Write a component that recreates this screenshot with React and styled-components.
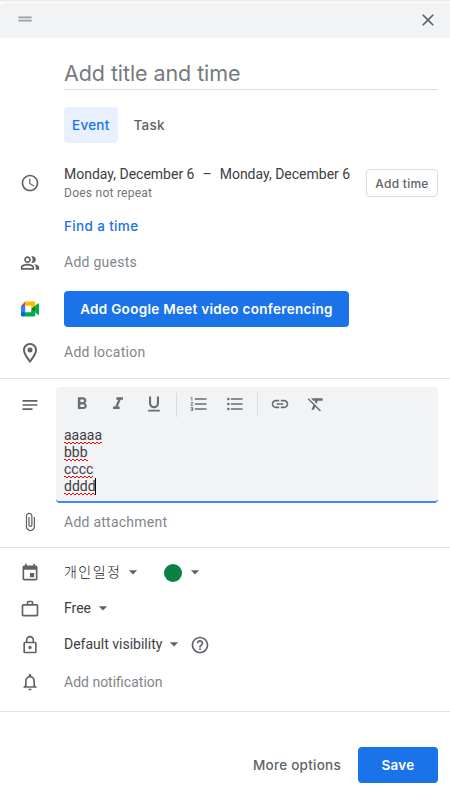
import {
  MdArrowDropDown,
  MdAttachFile,
  MdClose,
  MdDragHandle,
  MdEvent,
  MdFormatBold,
  MdFormatClear,
  MdFormatItalic,
  MdFormatListBulleted,
  MdFormatListNumbered,
  MdFormatUnderlined,
  MdHelpOutline,
  MdLink,
  MdNotes,
  MdNotificationsNone,
  MdOutlineLocationOn,
  MdOutlineLock,
  MdOutlinePeopleAlt,
  MdSchedule,
  MdWorkOutline,
} from 'react-icons/md';
import styled, { createGlobalStyle } from 'styled-components';

// Theme colors
const colors = {
  primary: '#1a73e8',
  primaryLight: '#e8f0fe',
  focus: '#4285f4',
  surface: '#f1f3f4',
  border: '#dadce0',
  divider: '#e3e4e5',
  text: '#3c4043',
  textSecondary: '#5f6368',
  placeholder: '#80868b',
  calendar: '#0b8043',
};

const fonts = {
  body: `Roboto, 'Noto Sans CJK KR', sans-serif`,
  display: `Inter, 'Liberation Sans', sans-serif`,
};

const GlobalStyle = createGlobalStyle`
  * {
    box-sizing: border-box;
  }

  body {
    margin: 0;
    background: #fff;
    color: ${colors.text};
    font-family: ${fonts.body};
    font-size: 14px;
  }

  button {
    font: inherit;
    color: inherit;
    background: none;
    border: 0;
    padding: 0;
    cursor: pointer;
  }
`;

const Dialog = styled.div`
  width: 450px;
  height: 786px;
  overflow: hidden;
  border-top: 2px solid #eeeeee;
  background: #fff;
`;

const Header = styled.header`
  display: flex;
  align-items: center;
  justify-content: space-between;
  height: 35px;
  margin-top: 1px;
  padding: 0 12px 2px 15px;
  border-radius: 4px 0 0 0;
  background: ${colors.surface};
  color: ${colors.textSecondary};

  .handle {
    color: #9aa0a6;
    margin-top: -1px;
  }
`;

const TitleInput = styled.div`
  height: 52px;
  margin: 0 12px 0 64px;
  border-bottom: 1px solid ${colors.border};
  color: #757a7f;
  font-family: ${fonts.display};
  font-size: 21.5px;
  line-height: 71px;
  letter-spacing: -0.08px;
  white-space: nowrap;
`;

const Tabs = styled.div`
  display: flex;
  gap: 8px;
  margin: 17px 0 0 64px;
`;

const Tab = styled.button`
  height: 36px;
  padding: 0 8px;
  border-radius: 4px;
  background: ${({ $active }) => ($active ? colors.primaryLight : 'transparent')};
  color: ${({ $active }) => ($active ? colors.primary : colors.textSecondary)};
  font-family: ${fonts.display};
  font-size: 13.5px;
  font-weight: 500;
  letter-spacing: 0.25px;
`;

const Row = styled.div`
  display: flex;
  align-items: center;
  height: ${({ $height }) => $height || 36}px;
  margin-top: ${({ $top }) => $top || 0}px;
  padding: 0 12px 0 20px;
`;

const RowIcon = styled.span`
  display: flex;
  flex: 0 0 20px;
  justify-content: center;
  min-width: 0;
  margin-right: 24px;
  padding-top: ${({ $drop }) => $drop || 0}px;
  color: ${colors.textSecondary};

  svg {
    flex-shrink: 0;
  }
`;

const Placeholder = styled.span`
  color: ${colors.placeholder};
  letter-spacing: ${({ $spacing = 0.25 }) => $spacing}px;
`;

const DateInfo = styled.div`
  flex: 1;
  white-space: nowrap;

  .range {
    display: flex;
    line-height: 20px;
  }

  .dash {
    margin: 0 8px;
  }

  .repeat {
    color: #70757a;
    font-size: 12px;
    line-height: 18px;
    letter-spacing: 0.25px;
  }
`;

const OutlinedButton = styled.button`
  width: 72px;
  height: 28px;
  border: 1px solid ${colors.border};
  border-radius: 4px;
  color: ${colors.textSecondary};
  font-family: ${fonts.display};
  font-size: 12px;
  font-weight: 500;
  letter-spacing: 0.25px;
  white-space: nowrap;
`;

const LinkButton = styled.button`
  display: block;
  height: 36px;
  margin-left: 64px;
  color: ${colors.primary};
  font-family: ${fonts.display};
  font-size: 13.5px;
  font-weight: 500;
  letter-spacing: 0.35px;
`;

const PrimaryButton = styled.button`
  width: ${({ $width }) => $width}px;
  height: 36px;
  border-radius: 4px;
  background: ${colors.primary};
  color: #fff;
  font-family: ${fonts.display};
  font-size: 13.5px;
  font-weight: 600;
  letter-spacing: 0.3px;
  white-space: nowrap;
`;

const Divider = styled.hr`
  height: 1px;
  margin: ${({ $top }) => $top}px 0 0;
  border: 0;
  background: ${colors.divider};
`;

const DescriptionRow = styled.div`
  display: flex;
  align-items: flex-start;
  padding: 8px 12px 0 20px;

  ${RowIcon} {
    margin: 8px 16px 0 0;
  }
`;

const Editor = styled.div`
  flex: 1;
  height: 116px;
  border-bottom: 2px solid ${colors.focus};
  border-radius: 4px;
  background: ${colors.surface};
`;

const Toolbar = styled.div`
  display: flex;
  align-items: center;
  height: 36px;
  padding-left: 8px;
  color: #6b6e71;
`;

const ToolButton = styled.button`
  display: flex;
  align-items: center;
  justify-content: center;
  width: 36px;
  height: 34px;
  padding-bottom: 2px;
`;

const ToolSeparator = styled.span`
  width: 1px;
  height: 24px;
  margin: 0 4px;
  background: ${colors.border};
`;

const Lines = styled.div`
  padding: 4px 8px;
  line-height: 17px;
`;

const Line = styled.div`
  display: flex;
  height: 17px;
`;

// Spell-check squiggle under the word
const Misspelled = styled.span`
  height: 17px;
  background:
    linear-gradient(45deg, transparent 40%, #f00 40% 60%, transparent 60%) 0 100% / 4px 2px repeat-x,
    linear-gradient(-45deg, transparent 40%, #f00 40% 60%, transparent 60%) 2px 100% / 4px 2px repeat-x;
`;

const Caret = styled.span`
  width: 1px;
  height: 17px;
  margin-left: -1px;
  background: #000;
`;

const Select = styled.button`
  display: flex;
  align-items: center;

  svg {
    margin-left: 2px;
    color: ${colors.textSecondary};
  }
`;

const CalendarName = styled.span`
  margin-bottom: 2px;
  color: #202124;
  font-weight: 300;
  letter-spacing: 1.45px;
`;

const ColorDot = styled.span`
  width: 18px;
  height: 18px;
  margin: 2px 1px 0 21px;
  border-radius: 50%;
  background: ${colors.calendar};
`;

const HelpIcon = styled(MdHelpOutline)`
  margin: 2px 0 0 6px;
  color: ${colors.textSecondary};
`;

const PinIcon = styled(MdOutlineLocationOn)`
  margin: 0 -2px;
`;

const Footer = styled.footer`
  display: flex;
  align-items: center;
  justify-content: flex-end;
  gap: 17px;
  padding: 35px 12px 0 0;
`;

const TextButton = styled.button`
  height: 36px;
  color: ${colors.textSecondary};
  font-family: ${fonts.display};
  font-size: 13.5px;
  font-weight: 500;
  letter-spacing: 0.25px;
`;

function MeetLogo() {
  return (
    <svg width="20" height="20" viewBox="-4.9 -12.6 97.2 97.2">
      <path fill="#00832d" d="M49.5 36l8.53 9.75 11.47 7.33 2-17.02-2-16.64-11.69 6.44z" />
      <path fill="#0066da" d="M0 51.5V66c0 3.315 2.685 6 6 6h14.5l3-10.96-3-9.54-9.95-3z" />
      <path fill="#e94235" d="M20.5 0L0 20.5l10.55 3 9.95-3 2.95-9.41z" />
      <path fill="#2684fc" d="M20.5 20.5H0v31h20.5z" />
      <path
        fill="#00ac47"
        d="M82.6 8.68L69.5 19.42v33.66l13.16 10.79c1.97 1.54 4.85.135 4.85-2.37V11c0-2.535-2.945-3.925-4.91-2.32zM49.5 36v15.5h-29V72h43c3.315 0 6-2.685 6-6V53.08z"
      />
      <path fill="#ffba00" d="M63.5 0h-43v20.5h29V36l20-16.57V6c0-3.315-2.685-6-6-6z" />
    </svg>
  );
}

const toolGroups = [
  [MdFormatBold, MdFormatItalic, MdFormatUnderlined],
  [MdFormatListNumbered, MdFormatListBulleted],
  [MdLink, MdFormatClear],
];

const description = ['aaaaa', 'bbb', 'cccc', 'dddd'];

function DescriptionEditor() {
  return (
    <Editor>
      <Toolbar>
        {toolGroups.map((group, index) => [
          index > 0 && <ToolSeparator key={`separator-${index}`} />,
          ...group.map((Icon) => (
            <ToolButton key={Icon.name}>
              <Icon size={20} />
            </ToolButton>
          )),
        ])}
      </Toolbar>
      <Lines>
        {description.map((line, index) => (
          <Line key={line}>
            <Misspelled>{line}</Misspelled>
            {index === description.length - 1 && <Caret />}
          </Line>
        ))}
      </Lines>
    </Editor>
  );
}

export default function App() {
  return (
    <>
      <GlobalStyle />
      <Dialog>
        <Header>
          <MdDragHandle className="handle" size={20} />
          <MdClose size={20} />
        </Header>
        <TitleInput>Add title and time</TitleInput>
        <Tabs>
          <Tab $active>Event</Tab>
          <Tab>Task</Tab>
        </Tabs>
        <Row $height={50} $top={15}>
          <RowIcon>
            <MdSchedule size={20} />
          </RowIcon>
          <DateInfo>
            <div className="range">
              <span>Monday, December 6</span>
              <span className="dash">–</span>
              <span>Monday, December 6</span>
            </div>
            <div className="repeat">Does not repeat</div>
          </DateInfo>
          <OutlinedButton>Add time</OutlinedButton>
        </Row>
        <LinkButton>Find a time</LinkButton>
        <Row>
          <RowIcon $drop={2}>
            <MdOutlinePeopleAlt size={20} />
          </RowIcon>
          <Placeholder>Add guests</Placeholder>
        </Row>
        <Row $top={11}>
          <RowIcon>
            <MeetLogo />
          </RowIcon>
          <PrimaryButton $width={285}>Add Google Meet video conferencing</PrimaryButton>
        </Row>
        <Row $top={7}>
          <RowIcon $drop={2}>
            <PinIcon size={24} />
          </RowIcon>
          <Placeholder>Add location</Placeholder>
        </Row>
        <Divider $top={8} />
        <DescriptionRow>
          <RowIcon>
            <MdNotes size={20} />
          </RowIcon>
          <DescriptionEditor />
        </DescriptionRow>
        <Row $height={38}>
          <RowIcon>
            <MdAttachFile size={20} />
          </RowIcon>
          <Placeholder>Add attachment</Placeholder>
        </Row>
        <Divider $top={6} />
        <Row $top={6}>
          <RowIcon $drop={2}>
            <MdEvent size={20} />
          </RowIcon>
          <Select>
            <CalendarName>개인일정</CalendarName>
            <MdArrowDropDown size={20} />
          </Select>
          <Select>
            <ColorDot />
            <MdArrowDropDown size={20} />
          </Select>
        </Row>
        <Row>
          <RowIcon $drop={2}>
            <MdWorkOutline size={20} />
          </RowIcon>
          <Select>
            Free
            <MdArrowDropDown size={20} />
          </Select>
        </Row>
        <Row>
          <RowIcon $drop={2}>
            <MdOutlineLock size={20} />
          </RowIcon>
          <Select>
            Default visibility
            <MdArrowDropDown size={20} />
          </Select>
          <HelpIcon size={20} />
        </Row>
        <Row $top={2}>
          <RowIcon>
            <MdNotificationsNone size={20} />
          </RowIcon>
          <Placeholder $spacing={0}>Add notification</Placeholder>
        </Row>
        <Divider $top={11} />
        <Footer>
          <TextButton>More options</TextButton>
          <PrimaryButton $width={80}>Save</PrimaryButton>
        </Footer>
      </Dialog>
    </>
  );
}
